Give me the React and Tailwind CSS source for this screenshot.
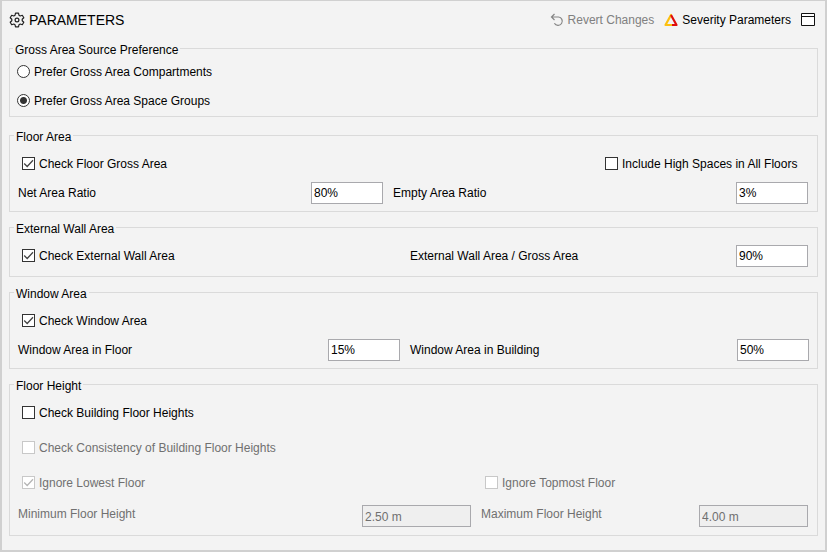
import React, { useId } from "react";

function GearIcon() {
  return (
    <svg width="16" height="16" viewBox="0 0 16 16" fill="none" stroke="#222" strokeWidth="1.2" strokeLinejoin="round" aria-hidden="true">
      <path d="M6.500 1.200h3l.5 2.100 1.200.7 2.100-.7 1.500 2.500-1.600 1.500v1.400l1.600 1.500-1.500 2.500-2.100-.7-1.200.7-.5 2.100h-3L6 12.700 4.800 12l-2.100.7-1.500-2.500 1.600-1.500V7.300L1.200 5.800l1.500-2.500 2.100.7L6 3.300z" />
      <circle cx="8" cy="8" r="1.9" />
    </svg>
  );
}

function RevertIcon() {
  return (
    <svg width="14" height="14" viewBox="0 0 14 14" fill="none" stroke="#858585" strokeWidth="1.2" aria-hidden="true">
      <path d="M4.500 1 1.500 4l3 3M1.500 4h7a4.200 4.200 0 1 1-4.100 6.200" />
    </svg>
  );
}

function SeverityIcon() {
  return (
    <svg width="14" height="14" viewBox="0 0 14 14" fill="none" strokeWidth="2.2" strokeLinejoin="round" aria-hidden="true">
      <path d="M8 12H1.500L7 2" stroke="#fcc010" strokeLinecap="round" />
      <path d="M7 2l5.500 10H8" stroke="#e00d0d" />
    </svg>
  );
}

function WindowIcon() {
  return (
    <svg width="14" height="13" viewBox="0 0 14 13" fill="#fff" stroke="#111" aria-hidden="true">
      <path d="M.5.5h13v12H.5zM.5 3.500h13" />
    </svg>
  );
}

function Group({ title, className = "", children }) {
  return (
    <fieldset className={`min-w-0 border border-[#dadada] ${className}`}>
      <legend className="-ml-1 px-0.5 pt-1 leading-[13px]">{title}</legend>
      {children}
    </fieldset>
  );
}

function Radio({ label, ...props }) {
  return (
    <label className="flex h-[29px] items-center gap-1">
      <input
        type="radio"
        name="source"
        className="size-[13px] appearance-none rounded-full border border-[#333] bg-white checked:bg-[radial-gradient(circle,#333_3px,#fff_4px)]"
        {...props}
      />
      {label}
    </label>
  );
}

function Check({ label, disabled, className = "", ...props }) {
  return (
    <label className={`flex items-center gap-1 ${disabled ? "text-[#707070]" : ""} ${className}`}>
      <span className="grid size-[13px]">
        <input
          type="checkbox"
          disabled={disabled}
          className="peer col-start-1 row-start-1 size-[13px] appearance-none border border-[#333] bg-white disabled:border-[#c8c8c8]"
          {...props}
        />
        <svg
          viewBox="0 0 13 13"
          className={`pointer-events-none invisible col-start-1 row-start-1 size-[13px] peer-checked:visible ${disabled ? "stroke-[#b5b5b5]" : "stroke-[#444]"}`}
          fill="none"
          strokeWidth="1.3"
          aria-hidden="true"
        >
          <path d="M2.200 6.500 5.200 9.500 11 3.300" />
        </svg>
      </span>
      {label}
    </label>
  );
}

function Field({ label, value, wide, disabled }) {
  const id = useId();
  return (
    <div className={`flex justify-between ${disabled ? "items-start" : "items-center"}`}>
      <label htmlFor={id} className={disabled ? "leading-[18px] text-[#707070]" : ""}>{label}</label>
      <input
        id={id}
        type="text"
        defaultValue={value}
        disabled={disabled}
        className={`h-[22px] border border-[#a9a9ad] bg-white px-[2px] pt-px disabled:bg-[#efefef] disabled:text-[#707070] ${wide ? "w-[109px]" : "w-[72px]"}`}
      />
    </div>
  );
}

export default function App() {
  return (
    <main className="border-2 border-t border-[#d0d0d0] bg-[#f3f3f3] px-[7px] pb-[14px] font-['Liberation_Sans',Arial,sans-serif] text-[12px] leading-4 text-black">
      <header className="flex h-[39px] items-center justify-between pr-[3px] pb-[2px]">
        <h1 className="flex items-center gap-1 text-[14px]">
          <GearIcon />
          PARAMETERS
        </h1>
        <div className="flex items-center gap-[10px]">
          <button type="button" disabled className="flex items-center gap-1 text-[#808080]">
            <RevertIcon />
            Revert Changes
          </button>
          <button type="button" className="flex items-center gap-1">
            <SeverityIcon />
            Severity Parameters
          </button>
          <button type="button" aria-label="Open in window">
            <WindowIcon />
          </button>
        </div>
      </header>

      <div className="flex flex-col gap-[7px]">
        <Group title="Gross Area Source Preference" className="mb-[3px] pb-px pl-[7px]">
          <Radio label="Prefer Gross Area Compartments" />
          <Radio label="Prefer Gross Area Space Groups" defaultChecked />
        </Group>

        <Group title="Floor Area" className="pt-[5px] pr-[9px] pb-1 pl-2">
          <div className="flex h-[29px] items-center justify-between pl-1">
            <Check label="Check Floor Gross Area" defaultChecked />
            <Check label="Include High Spaces in All Floors" className="w-[203px]" />
          </div>
          <div className="grid h-[29px] grid-cols-[365fr_415fr] items-center gap-x-[10px]">
            <Field label="Net Area Ratio" value="80%" />
            <Field label="Empty Area Ratio" value="3%" />
          </div>
        </Group>

        <Group title="External Wall Area" className="pt-[5px] pr-[9px] pb-[6px] pl-2">
          <div className="grid h-[29px] grid-cols-[382fr_398fr] items-center gap-x-[10px]">
            <Check label="Check External Wall Area" className="pl-1" defaultChecked />
            <Field label="External Wall Area / Gross Area" value="90%" />
          </div>
        </Group>

        <Group title="Window Area" className="pt-[5px] pr-2 pb-1 pl-2">
          <Check label="Check Window Area" className="h-[29px] pl-1" defaultChecked />
          <div className="grid h-[29px] grid-cols-[382fr_399fr] items-center gap-x-[10px]">
            <Field label="Window Area in Floor" value="15%" />
            <Field label="Window Area in Building" value="50%" />
          </div>
        </Group>

        <Group title="Floor Height" className="pt-[5px] pr-[9px] pb-2 pl-2">
          <Check label="Check Building Floor Heights" className="mb-[3px] h-[29px] pl-1" />
          <Check label="Check Consistency of Building Floor Heights" className="h-[35px] pl-1" disabled />
          <div className="grid h-[35px] grid-cols-[453fr_327fr] items-center gap-x-[10px]">
            <Check label="Ignore Lowest Floor" className="pl-1" disabled defaultChecked />
            <Check label="Ignore Topmost Floor" className="pl-1" disabled />
          </div>
          <div className="grid grid-cols-[453fr_327fr] gap-x-[10px] pt-[5px]">
            <Field label="Minimum Floor Height" value="2.50 m" wide disabled />
            <Field label="Maximum Floor Height" value="4.00 m" wide disabled />
          </div>
        </Group>
      </div>
    </main>
  );
}
